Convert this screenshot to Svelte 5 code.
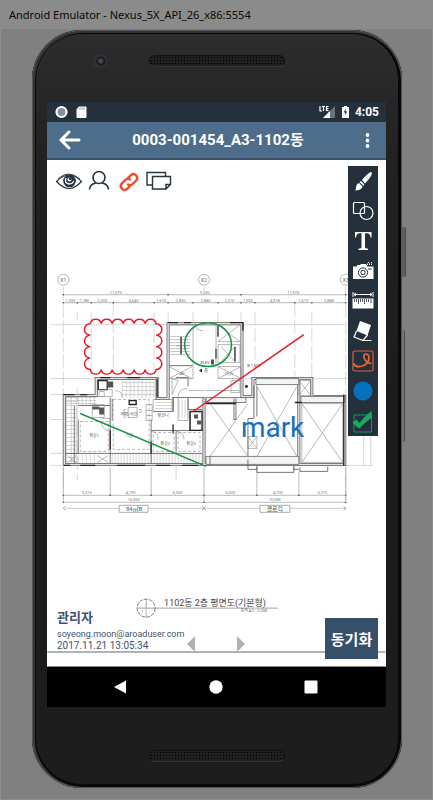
<script>
  const tools = ['Brush', 'Shapes', 'Text', 'Camera', 'Ruler', 'Eraser', 'Freehand', 'Color', 'Confirm'];
  const views = ['Show markup', 'User', 'Link', 'Notes'];

  // dimension chains: tick positions and the label between each pair
  const dims = [
    { y: 294, x: [63, 168, 241, 346], t: ['11,970', '9,350', '11,970'] },
    {
      y: 302,
      x: [63, 77, 91, 113, 154, 168, 193, 218, 241, 255, 295, 312, 346],
      t: ['1,300', '1,780', '2,330', '4,640', '1,610', '2,850', '2,880', '2,370', '1,500', '4,018', '1,670', '3,888']
    },
    { y: 495, x: [63, 110, 151, 204, 257, 299, 346], t: ['5,315', '4,700', '6,300', '6,000', '4,700', '5,315'] },
    { y: 502, x: [63, 204, 346], t: ['16,055', '10,000'] }
  ];
  const axes = [['X1', 63], ['X2', 204], ['X3', 346]];

  const arcs = (n, dx, dy) => `a5.600 5.600 0 0 1 ${dx} ${dy}`.concat(' ').repeat(n);
  const cloud = `M90 323${arcs(6, 11, 0)}${arcs(4, 0, 11.5)}${arcs(6, -11, 0)}${arcs(4, 0, -11.5)}`;

  // double-line walls, drawn once as an outline and once as its lighter core
  const walls = 'M64 464V395H96V378H157V398H168V323H242V396H253V378H312V396H345V464H64M204 397V464M299 379V464';
  const bands = 'M206 397h40v5h-40zM256 378h43v6h-43zM206 456h93v8h-93zM301 396h44v6h-44z';

  const hatch = (x0, x1, y0, y1, step) => {
    let d = '';
    for (let x = x0; x <= x1; x += step) d += `M${x} ${y0}V${y1}`;
    return d;
  };
  const rungs = (x0, x1, y0, y1, step) => {
    let d = '';
    for (let y = y0; y <= y1; y += step) d += `M${x0} ${y}H${x1}`;
    return d;
  };
</script>

<div class="window">
  <header class="titlebar">Android Emulator - Nexus_5X_API_26_x86:5554</header>

  <div class="phone">
    <span class="side power"></span>
    <span class="side volume"></span>
    <div class="forehead">
      <span class="lens"></span>
      <span class="speaker"></span>
    </div>

    <div class="screen">
      <div class="status">
        <svg width="32" height="14" viewBox="0 0 32 14">
          <circle cx="6.500" cy="7" r="5" fill="#87909a" stroke="#fff" stroke-width="2.200" />
          <path d="M24 1.500h6.500q1 0 1 1V12q0 1-1 1h-8q-1 0-1-1V4.500z" fill="#fff" />
          <path d="M25 2.500v2M27 2.500v2M29 2.500v2" stroke="#7c8691" />
        </svg>
        <div class="right">
          <svg width="31" height="14" viewBox="0 0 31 14">
            <path d="M16 1v12H4z" fill="#6a737d" />
            <path d="M11 6v7H4z" fill="#fff" />
            <path d="M1 1v5h2M3 1.500h3M4.500 1.500V6M9.500 1.500H7.500V5.500h2M7.500 3.500h2" stroke="#fff" stroke-width="1.200" fill="none" />
            <path d="M23 2h2V1h3v1h2v11h-7z" fill="#fff" />
            <path d="M27 3.500l-2.500 4h1.800l-.5 3 2.500-4h-1.800z" fill="#25303d" />
          </svg>
          <span>4:05</span>
        </div>
      </div>

      <div class="appbar">
        <button aria-label="Back">
          <svg width="24" height="22" viewBox="0 0 24 22"><path d="M12 3L4 11l8 8M4 11h18" fill="none" stroke="#fff" stroke-width="3" stroke-linecap="round" /></svg>
        </button>
        <h1>0003-001454_A3-1102동</h1>
        <button aria-label="More options">
          <svg width="24" height="22" viewBox="0 0 24 22" fill="#fff"><circle cx="12.500" cy="6" r="1.900" /><circle cx="12.500" cy="11.500" r="1.900" /><circle cx="12.500" cy="17" r="1.900" /></svg>
        </button>
      </div>

      <main>
        <svg class="drawing" viewBox="47 159 339 508" role="img" aria-label="Floor plan">
          <!-- grid axes -->
          <g stroke="#bdbdbd" stroke-width=".6" fill="none">
            <path d="M63 286V487M77 311V320M91 311V374M113 302V374M154 311V374M168 311V380M204 286V290M193 311V322M218 311V322M241 311V322M255 311V377M295 302V377M312 311V377M346 286V500M77 388V480M176 466V480" stroke-dasharray="14 3" />
            <path d="M50 324H345M50 378H160M245 378H376M50 394H62M50 419H62M50 453H62M50 465H62M345 465H373M364 435V465M371 435V465" />
          </g>
          <g stroke="#8c8c8c" stroke-width=".6" fill="#888">
            {#each dims as d}
              <path d={`M${d.x[0]} ${d.y}H${d.x[d.x.length - 1]}`} />
              {#each d.x as x}<circle cx={x} cy={d.y} r=".8" stroke="none" fill="#444" />{/each}
            {/each}
            <path d="M63 467V502M110 467V495M151 467V495M204 467V502M257 471V495M299 471V495M346 467V502" />
            <path d="M65 508H119M148 508H203M206 508H260M290 508H345" stroke="#aaa" />
            <path d="M65 506l-2 2 2 2M202 506l2 2-2 2M206 506l-2 2 2 2M344 506l2 2-2 2" stroke="#555" fill="none" />
          </g>
          <g class="tiny">
            {#each dims as d}
              {#each d.t as t, i}<text x={(d.x[i] + d.x[i + 1]) / 2} y={d.y - 1}>{t}</text>{/each}
            {/each}
          </g>
          {#each axes as [name, x]}
            <circle cx={x} cy="279" r="5.500" fill="#fff" stroke="#999" stroke-width=".7" />
            <text class="axis" {x} y="281">{name}</text>
          {/each}
          <g fill="#fff" stroke="#888" stroke-width=".7"><path d="M119 505h29v7h-29zM260 505h30v7h-30z" /></g>
          <text class="tag" x="134" y="511">84㎡B</text>
          <text class="tag" x="275" y="511">클로킥</text>

          <!-- floor finishes -->
          <g stroke="#aaa" stroke-width=".5">
            <path d={rungs(65, 76, 397, 463, 4) + hatch(66, 76, 396, 463, 5)} />
            <path d={rungs(66, 96, 397, 404, 3) + hatch(78, 96, 396, 405, 4)} />
            <path d={rungs(122, 154, 382, 396, 4) + hatch(122, 154, 380, 397, 4)} />
            <path d={hatch(112, 202, 453, 463, 3) + hatch(78, 96, 454, 463, 4)} />
            <path d={rungs(155, 172, 399, 409, 3) + hatch(179, 188, 399, 417, 3)} />
            <path d={rungs(170, 190, 336, 354, 3)} stroke="#888" />
          </g>

          <!-- outer walls -->
          <path d={walls} fill="none" stroke="#5a5a5a" stroke-width="3" />
          <path d={walls} fill="none" stroke="#e2e2e2" stroke-width="1.500" />
          <path d={bands} fill="#f3f3f3" stroke="#666" stroke-width=".8" />
          <g fill="none" stroke="#555" stroke-width=".8">
            <path d="M172 397H204M176 377H188V386M169 365H192" />
            <path d="M254 385V418H248V456M257 385V416M234 398V419H236V398" />
            <path d="M210 456V465M248 459V469H257V465M294 465V469H299M257 467V472H294V467M300 467V471H328V466" />
            <path d="M65 453H202M110 397V463M151 419V463M78 405H110M78 419V453M74 405V463M151 430H176V453M176 430H202M153 411H173V397M173 397V411M188 397V409H202M190 411V430M112 398V420" />
          </g>
          <g fill="none" stroke="#222" stroke-width="1.300">
            <path d="M63 465H70M80 465H95M117 465H145M156 465H170M182 465H198M63 394H74M80 394H87M100 377H110M127 377H140M168 322H178M184 322H191M230 322H243V330M151 453V441M206 403H236M344 394V465M295 402H302M110 430V449M157 378V397" />
            <path d="M98 380h9v9h-9zM129 400h7v4h-7zM190 411h12v19h-12z" />
            <path d="M181 336V354M218 325V336M216 348V358M235 346V361M173 433V424" />
          </g>
          <path d="M107 381h6v6h-6zM92 406h7v3h-7zM99 407h5v7h-5zM194 414h4v4h-4zM197 420h4v4h-4zM211 359h3v5h-3z" fill="#555" />

          <!-- openings, furniture and service shafts -->
          <g fill="none" stroke="#888" stroke-width=".6">
            <path d="M169 324H193V365H169M218 324L240 341M240 324L218 341M218 341H240M218 344H240V362H218zM221 346L235 361M235 346L221 361" />
            <path d="M218 366H241V378H218zM218 366L241 378M241 366L218 378M216 324V366M193 365V378H169M169 366L192 378M192 366L169 378M172 378V394L178 380zM190 345H176" />
            <path d="M210 403L248 456M248 403L210 456M257 386L297 456M297 386L257 456M302 403L343 462M343 403L302 462M302 403H343V462H302z" />
            <path d="M67 455L76 463M76 455L67 463M97 455L108 462M108 455L97 462M299 380h12v15h-12zL311 395M311 380L299 395M248 436h9v12h-9zL257 448M257 436L248 448" />
            <path d="M92 404h12v13H92zM102 418h8v8M98 389h14v7H98M128 407h9v10h-9zM126 409h-2v3h2M126 414h-2v3h2M139 409h2v3h-2M146 404h6v16h-6zM146 410h6M146 415h6M178 397v23h10v-23" />
            <path d="M151 431q7 0 7 8M176 431q8 0 8 8M110 430q-8 0-9-8M122 397q0-7-7-7M178 397q0-9 9-9M203 330q-8 0-8-8M99 391h5v5h-5zM240 380h-9v12h9z" />
            <path d="M153 399H172V411H153zM189 390H204M206 390H240" />
            <path d="M80 421H108V451H80zM113 399H149V449H113zM153 432H174V451H153zM178 432H200V451H178z" stroke-dasharray="3 2" />
          </g>
          <circle cx="246.500" cy="386" r="1.500" fill="#222" />
          <path d="M199 370l3-2v4z" fill="#222" />
          <g class="tiny room">
            <text x="94" y="437">침실1</text>
            <text x="129" y="437">거실</text>
            <text x="129" y="416">주방/식당</text>
            <text x="163" y="417">발코니</text>
            <text x="165" y="445">침실2</text>
            <text x="191" y="445">침실3</text>
            <text x="205" y="363">ELEV</text>
            <text x="229" y="374">(1,2)</text>
            <text x="206" y="371">홀</text>
            <text x="182" y="374">AV</text>
            <text x="254" y="366">B 1,500</text>
          </g>

          <!-- drawing title -->
          <g stroke="#444" stroke-width=".7" fill="none">
            <circle cx="146" cy="608" r="9" stroke-dasharray="4 1" />
            <path d="M137 608H278" stroke="#777" /><path d="M146 599V617" stroke="#999" />
          </g>
          <text class="tiny" x="146" y="606">1</text>
          <text class="tiny" x="142" y="613">1</text>
          <text class="caption" x="164" y="606">1102동 2층 평면도(기본형)</text>
          <text class="tiny room" x="254" y="612">축척 A3 - 1/200</text>
          <path d="M47 652H386" stroke="#63696d" /><path d="M47 666.500H386" stroke="#888" />

          <!-- markup -->
          <path d={cloud} fill="none" stroke="#e51c2c" stroke-width="1.500" />
          <ellipse cx="208" cy="344" rx="23.500" ry="22" fill="none" stroke="#159447" stroke-width="1.500" />
          <path d="M193 411L304 334" stroke="#e0202f" stroke-width="1.500" />
          <path d="M80 413L206 466" stroke="#159447" stroke-width="1.500" />
          <text class="mark" x="241" y="437">mark</text>
        </svg>

        <div class="top">
          <nav class="views">
            {#each views as v, i}
              <button aria-label={v}>
                <svg width="30" height="30" viewBox="0 0 30 30" fill="none" stroke="#263442" stroke-width="1.600">
                  {#if i === 0}
                    <path d="M2.500 15.500Q9 9 15 9T27.500 15.500Q21 22.500 15 22.500T2.500 15.500z" stroke-width="1.200" />
                    <circle cx="15.500" cy="15" r="6.300" fill="#263442" stroke="none" />
                    <path d="M12 12q-2 5 3 6 4 0 4.500-3" stroke="#fff" stroke-width="1.300" /><circle cx="15.500" cy="13.500" r="2" fill="#fff" stroke="none" /><circle cx="16.200" cy="12.800" r="1.400" fill="#263442" stroke="none" />
                    <path d="M4 13Q14 3 26 13" stroke-width="1" />
                  {:else if i === 1}
                    <circle cx="15" cy="11.500" r="6" />
                    <path d="M12 17Q6 18 5.500 23.500M18 17Q24 18 24.500 23.500" />
                  {:else if i === 2}
                    <g stroke="#f0492c" stroke-width="2.400" transform="rotate(-45 15 16)">
                      <path d="M14 19.500H8.500a3.800 3.800 0 010-7.500H14a3.800 3.800 0 013.500 4M16 12.500h5.500a3.800 3.800 0 010 7.500H16a3.800 3.800 0 01-3.500-4" />
                    </g>
                  {:else}
                    <path d="M8 19H3V6.500h18.500v4M8.500 10.500h18v8l-4.500 4.500H8.500zM22 23v-4.500h4.500" stroke-width="1.400" />
                  {/if}
                </svg>
              </button>
            {/each}
          </nav>

          <div class="tools" role="toolbar" aria-label="Markup tools">
            {#each tools as t, i}
              <button aria-label={t}>
                <svg width="30" height="30" viewBox="0 0 30 30" fill="none" stroke="#fff">
                  {#if i === 0}
                    <path d="M14 14Q19 8 22.500 6q2 0 1 3-2 4-6.500 8.500z" fill="#fff" stroke="none" />
                    <path d="M13 15l3.500 3.500-1 1.500-4-4zM11 17l3.500 3.500q-1 4-7.500 4 1-1 1-3 .5-4 3-4.500z" fill="#fff" stroke="none" />
                  {:else if i === 1}
                    <rect x="5.500" y="6.500" width="11" height="11" rx="1" stroke-width="1.200" /><circle cx="18.500" cy="17" r="6.500" stroke-width="1.200" />
                  {:else if i === 2}
                    <path d="M7 6h16.500v5.500H22.500Q22 7.300 19 7.300h-2V21q0 1.700 3 1.700V24H10.500v-1.300q3 0 3-1.700V7.300h-2Q8.500 7.300 8 11.500H7z" fill="#fff" stroke="none" />
                  {:else if i === 3}
                    <path d="M5 10.500h4V9h3l1-1h5l1.500 2.500H25.500V23H5z" fill="#fff" stroke="none" />
                    <circle cx="15" cy="16.500" r="4.600" stroke="#25303d" /><circle cx="15" cy="16.500" r="2.200" stroke="#25303d" />
                    <path d="M20 13h3.500" stroke="#25303d" /><path d="M19.500 9V7.500M21.500 9V7.500M23.500 9V7.500M20 6.500h1M23 6.500h1" />
                  {:else if i === 4}
                    <path d="M5 6v5M25 6v5M6 8.500h18M8 7l-2 1.500L8 10M22 7l2 1.500L22 10" />
                    <path d="M4.500 12.500h21v10h-21z" fill="#fff" stroke="none" /><path d="M6.500 13v3M8.500 13v3M10.500 13v5M12.500 13v3M14.500 13v3M16.500 13v5M18.500 13v3M20.500 13v3M23 13v4" stroke="#25303d" stroke-width=".8" />
                  {:else if i === 5}
                    <path d="M12 5l11 4-3.500 10.500L8.500 15z" fill="#fff" stroke="none" />
                    <path d="M8.500 15l-2.500 6 9 3.500 4.500-5.500M15 24.500h8.500" stroke-width="1.200" />
                  {:else if i === 6}
                    <rect x="5" y="5" width="20" height="20" rx="1.500" stroke="#dd6038" stroke-width="1.200" />
                    <path d="M5.500 17.500q2 4 7 3Q21 19 21 11q-.5-3-3-3-3 .5-2 4 2 5 7.500 5.500" stroke="#f0653a" stroke-width="1.700" />
                  {:else if i === 7}
                    <circle cx="15" cy="15" r="9.500" fill="#0871bd" stroke="none" />
                  {:else}
                    <path d="M6 9h17.500v17H6z" stroke="#159a58" /><path d="M4.500 16.500l4-3 3 3.500q5-7 12-12l.5 6.500q-7 4.500-12.500 11Q8 21 4.500 16.500z" fill="#18aa60" stroke="none" />
                  {/if}
                </svg>
              </button>
            {/each}
          </div>
        </div>

        <div class="bottom">
          <div class="author">
            <strong>관리자</strong>
            <span class="mail">soyeong.moon@aroaduser.com</span>
            <span>2017.11.21 13:05:34</span>
          </div>
          <div class="pager">
            <button aria-label="Previous"><svg width="8" height="16" viewBox="0 0 8 16"><path d="M8 0v16L0 8z" fill="#b3b3b3" /></svg></button>
            <button aria-label="Next"><svg width="8" height="16" viewBox="0 0 8 16"><path d="M0 0v16l8-8z" fill="#b3b3b3" /></svg></button>
          </div>
          <button class="sync">동기화</button>
        </div>
      </main>

      <nav class="navbar">
        <button aria-label="Back"><svg width="14" height="14" viewBox="0 0 14 14"><path d="M13 0.500v13L1 7z" fill="#fff" /></svg></button>
        <button aria-label="Home"><svg width="14" height="14" viewBox="0 0 14 14"><circle cx="7" cy="7" r="6.700" fill="#fff" /></svg></button>
        <button aria-label="Recent apps"><svg width="14" height="14" viewBox="0 0 14 14"><rect x=".5" y=".5" width="13" height="13" rx="1" fill="#fff" /></svg></button>
      </nav>
    </div>

    <div class="chin"><span class="speaker"></span></div>
  </div>
</div>

<style>
  :global(body) { margin: 0; background: #808080; }
  * { box-sizing: border-box; }
  svg { display: block; flex: none; }
  button { display: flex; align-items: center; justify-content: center; padding: 0; border: 0; background: none; font: inherit; color: inherit; cursor: pointer; }

  .window {
    display: flex; flex-direction: column; min-height: 100vh; padding-bottom: 12px;
    background: #808080; box-shadow: inset 0 0 0 1px #8d8d8d;
    font-family: Roboto, "Noto Sans CJK KR", sans-serif;
  }
  .titlebar { height: 29px; padding-left: 9px; background: #8b8b8b; color: #080808; font: 11px/29px "Noto Sans", sans-serif; white-space: nowrap; }

  .phone {
    position: relative; flex: 1; display: flex; flex-direction: column; margin: 1px 31px 0 32px; padding: 0 16px 0 15px;
    border-radius: 50px; background: linear-gradient(#2d2d2f, #222223 16%, #1c1c1d 50%, #1d1d1e);
    box-shadow: inset 0 0 0 1px #555, inset 1px 1px 0 2px #343435, inset 0 0 0 4px #080808, 0 0 1px #666;
  }
  .side { position: absolute; left: 100%; width: 4px; background: #625e5e; border-right: 1px solid #4c4949; border-radius: 0 2px 2px 0; }
  .power { top: 197px; height: 50px; }
  .volume { top: 300px; height: 112px; width: 3px; background: #777; }

  .forehead { position: relative; display: flex; justify-content: center; height: 72px; padding-top: 25px; }
  .lens { position: absolute; left: 46px; top: 24px; width: 14px; height: 14px; border-radius: 50%; background: radial-gradient(circle at 55% 50%, #55484f 0 1px, #171419 4px, #323234 5px); }
  .speaker {
    width: 136px; height: 12px; border-radius: 6px; border: 1px solid #111; border-bottom-color: #363637;
    background: radial-gradient(circle, #000 1px, #202020 1px) 0 0 / 3px 3px;
  }
  .chin { display: flex; justify-content: center; height: 81px; padding-top: 43px; }

  .screen { flex: 1; display: flex; flex-direction: column; background: #fff; }
  .status { display: flex; align-items: center; justify-content: space-between; height: 20px; padding: 0 7px 0 8px; background: #25303d; color: #fff; font-size: 12px; font-weight: 700; }
  .right { display: flex; align-items: center; gap: 5px; }
  .appbar { display: flex; align-items: center; justify-content: space-between; height: 38px; padding: 0 7px 0 10px; background: #4e6d8a; border-bottom: 2px solid #3a536c; color: #fff; }
  h1 { margin: 0; font-size: 15px; line-height: 20px; font-weight: 700; }

  main { position: relative; flex: 1; display: flex; flex-direction: column; justify-content: space-between; min-height: 507px; }
  .drawing { position: absolute; inset: 0; width: 100%; height: 100%; }
  .top, .bottom { position: relative; display: flex; justify-content: space-between; padding-right: 8px; }
  .top { padding-top: 6px; padding-left: 7px; }
  .views { display: flex; height: 30px; }
  .tools { display: flex; flex-direction: column; width: 30px; background: #25303d; }

  .bottom { align-items: flex-end; padding-left: 10px; padding-bottom: 8px; }
  .author { display: flex; flex-direction: column; width: 130px; padding-bottom: 7px; color: #3d5370; font-size: 10px; line-height: 12px; white-space: nowrap; }
  .author strong { font-size: 13px; line-height: 20px; font-weight: 700; }
  .author .mail { font-size: 9px; }
  .pager { flex: 1; display: flex; gap: 42px; padding-bottom: 7px; }
  .sync { width: 53px; height: 41px; background: #364f6b; color: #fff; font-size: 15px; font-weight: 700; }

  .navbar { display: flex; align-items: center; justify-content: space-between; height: 40px; padding: 0 68px 0 66px; background: #000; }

  .tiny { font-size: 4px; fill: #777; text-anchor: middle; }
  .room { fill: #555; }
  .axis { font-size: 5px; fill: #666; text-anchor: middle; }
  .tag { font-size: 6px; fill: #555; text-anchor: middle; }
  .caption { font-size: 9px; fill: #444; }
  .mark { font-size: 28px; fill: #1570bd; }
</style>
